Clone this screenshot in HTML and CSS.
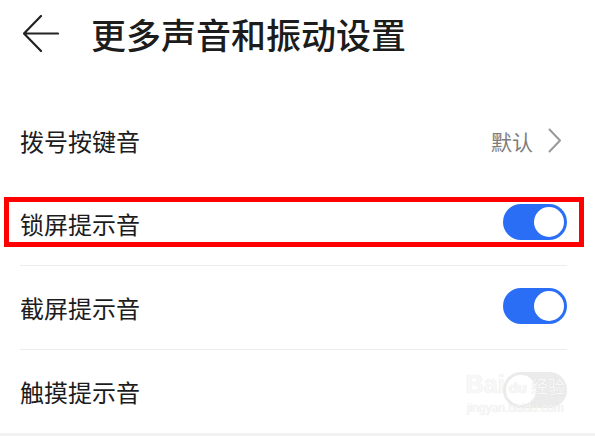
FILE: index.html
```html
<!DOCTYPE html>
<html lang="zh-CN">
<head>
  <meta charset="UTF-8">
  <meta name="viewport" content="width=device-width, initial-scale=1.0">
  <title>更多声音和振动设置</title>
  <link rel="stylesheet" href="styles.css">
</head>
<body>
  <div class="header">
    <svg class="back" width="36" height="37" viewBox="0 0 36 37">
      <path d="M18 1 L1 18.5 L18 36 M1 18.5 L35 18.5" fill="none" stroke="#222" stroke-width="2.2" stroke-linecap="round" stroke-linejoin="round"/>
    </svg>
    <h1>更多声音和振动设置</h1>
  </div>

  <div class="list">
    <div class="row">
      <span class="label">拨号按键音</span>
      <span class="value">默认
        <svg width="14" height="25" viewBox="0 0 14 25">
          <path d="M1.5 1.5 L12 12.5 L1.5 23.5" fill="none" stroke="#9a9a9a" stroke-width="2" stroke-linecap="round" stroke-linejoin="round"/>
        </svg>
      </span>
    </div>

    <div class="row line">
      <span class="label">锁屏提示音</span>
      <span class="switch on"></span>
      <!-- 截图上的红框标注 -->
      <div class="mark"></div>
    </div>

    <div class="row line">
      <span class="label">截屏提示音</span>
      <span class="switch on"></span>
    </div>

    <div class="row">
      <span class="label">触摸提示音</span>
      <span class="switch"></span>
      <div class="watermark">
        <span class="wm-logo">Bai<span class="wm-du">du</span><span class="wm-cn">经验</span></span>
        <span class="wm-url">jingyan.baidu.com</span>
      </div>
    </div>
  </div>
  <div class="bottom"></div>
</body>
</html>
```

FILE: styles.css
```css
body {
  margin: 0;
  background: #fff;
  font-family: "Noto Sans CJK SC", "Noto Sans", sans-serif;
  color: #1c1c1c;
  overflow: hidden;
}
.header {
  height: 67px;
  display: flex;
  align-items: center;
  padding-left: 23px;
}
.back {
  display: block;
  margin-top: -1px;
}
h1 {
  margin: 0 0 0 32px;
  font-size: 35px;
  font-weight: 500;
  line-height: 1;
}
.list {
  margin-top: 32px;
}
.row {
  position: relative;
  height: 83px;
  margin: 0 28px 0 20px;
  display: flex;
  align-items: center;
  justify-content: space-between;
}
.row.line {
  border-bottom: 1px solid #ececec;
}
.label {
  font-size: 24px;
  line-height: 1;
}
.value {
  display: flex;
  align-items: center;
  gap: 15px;
  font-size: 21px;
  color: #7d7d7d;
  margin-right: 5px;
}
.switch {
  position: relative;
  width: 64px;
  height: 36px;
  border-radius: 18px;
  background: #ebebeb;
  margin-top: -3px;
}
.switch::after {
  content: "";
  position: absolute;
  top: 3px;
  left: 3px;
  width: 30px;
  height: 30px;
  border-radius: 50%;
  background: #fff;
}
.switch.on {
  background: #2a6ef6;
}
.switch.on::after {
  left: 31px;
}
.mark {
  position: absolute;
  left: -16px;
  right: -17px;
  top: 15px;
  height: 40px;
  border: 5px solid #ff0000;
}
.watermark {
  position: absolute;
  right: 2px;
  top: 22px;
  display: flex;
  flex-direction: column;
  align-items: center;
  font-family: "Liberation Sans", sans-serif;
  color: #f8f8f8;
  text-shadow: 0 0 1px #dcdcdc;
}
.wm-logo {
  font-size: 25px;
  font-weight: bold;
  line-height: 1;
  white-space: nowrap;
}
.wm-du {
  font-size: 15px;
  margin: 0 4px;
}
.wm-cn {
  font-family: "Noto Sans CJK SC", sans-serif;
  font-size: 17px;
  font-weight: normal;
}
.wm-url {
  font-size: 12px;
  margin-top: 4px;
  white-space: nowrap;
}
.bottom {
  height: 6px;
  background: #f2f2f2;
}
```
